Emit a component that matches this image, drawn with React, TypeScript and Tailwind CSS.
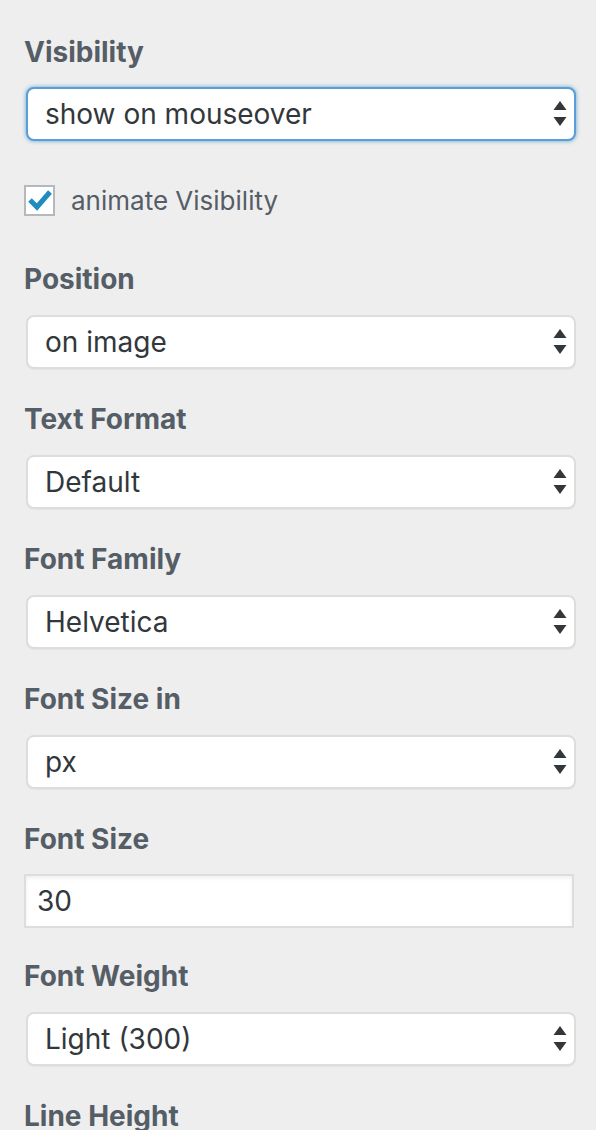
import React from "react";

const font = { fontFamily: "Inter, 'Liberation Sans', Arial, sans-serif" };

function Arrows() {
  return (
    <svg width="14" height="26" viewBox="0 0 14 26" className="shrink-0">
      <path d="M7 0 L13.5 9 L0.5 9 Z" fill="#32373c" />
      <path d="M0.5 16 L13.5 16 L7 25 Z" fill="#32373c" />
    </svg>
  );
}

function Label({ children }: { children: React.ReactNode }) {
  return (
    <div className="mb-[19px] text-[28px] font-bold leading-[34px] text-[#555d66]">
      {children}
    </div>
  );
}

function Select({ value, focused }: { value: string; focused?: boolean }) {
  return (
    <div
      className={
        focused
          ? "mx-[2px] flex h-[54px] w-[550px] items-center justify-between rounded-[8px] border-2 border-[#5b9dd9] bg-white pl-[17px] pr-[7px] shadow-[0_0_4px_rgba(30,140,190,0.7)]"
          : "mx-[2px] flex h-[54px] w-[550px] items-center justify-between rounded-[8px] border-2 border-[#dddddd] bg-white pl-[17px] pr-[7px] shadow-[0_1px_1px_rgba(0,0,0,0.04)]"
      }
    >
      <span className="text-[28px] leading-[34px] text-[#32373c]">{value}</span>
      <Arrows />
    </div>
  );
}

function Field({ label, value }: { label: string; value: string }) {
  return (
    <section className="mb-[33px]">
      <Label>{label}</Label>
      <Select value={value} />
    </section>
  );
}

export default function App() {
  return (
    <div className="min-h-[1130px] w-[596px] overflow-hidden bg-[#eeeeee] pl-[24px] pt-[35px]" style={font}>
      <section>
        <div className="mb-[18px] text-[28px] font-bold leading-[34px] text-[#555d66]">Visibility</div>
        <Select value="show on mouseover" focused />
      </section>

      <label className="mt-[42px] flex h-[34px] items-center gap-[16px]">
        <span className="flex h-[31px] w-[31px] items-center justify-center border-2 border-[#b4b9be] bg-white">
          <svg width="24" height="22" viewBox="0 0 24 22">
            <path d="M2 11 L9 18 L22 3" fill="none" stroke="#1e8cbe" strokeWidth="5" />
          </svg>
        </span>
        <span className="pt-[2px] text-[26px] leading-[32px] text-[#555d66]">animate Visibility</span>
      </label>

      <div className="mt-[45px]">
        <Field label="Position" value="on image" />
        <Field label="Text Format" value="Default" />
        <Field label="Font Family" value="Helvetica" />
        <Field label="Font Size in" value="px" />

        <section className="mb-[33px]">
          <Label>Font Size</Label>
          <div className="-mt-[1px] flex h-[54px] w-[550px] items-center border-2 border-[#dddddd] bg-white pl-[11px] shadow-[inset_0_2px_4px_rgba(0,0,0,0.07)]">
            <span className="text-[28px] leading-[34px] text-[#32373c]">30</span>
          </div>
        </section>

        <section className="-mt-[2px] mb-[33px]">
          <Label>Font Weight</Label>
          <Select value="Light (300)" />
        </section>
        <Label>Line Height</Label>
      </div>
    </div>
  );
}
